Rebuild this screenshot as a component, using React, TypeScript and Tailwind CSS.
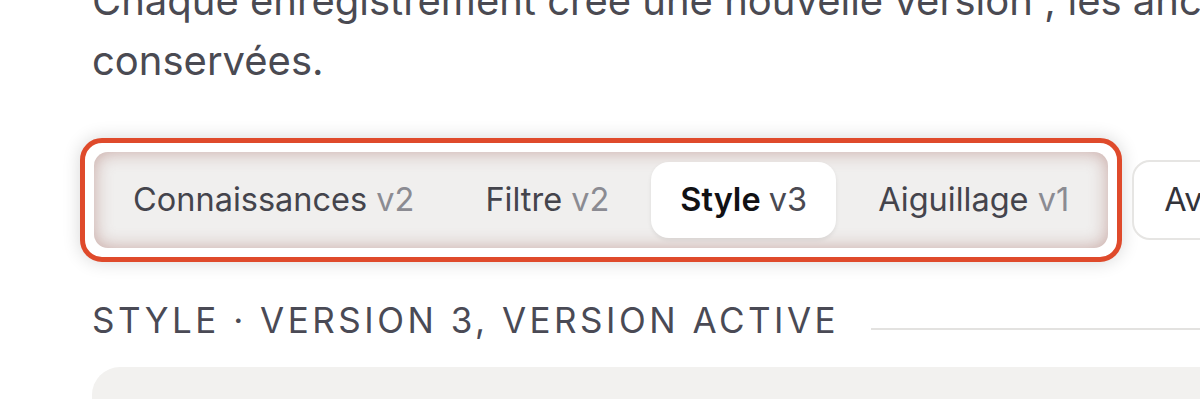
import React from "react";

const TABS = [
  { name: "Connaissances", version: "v2" },
  { name: "Filtre", version: "v2" },
  { name: "Style", version: "v3" },
  { name: "Aiguillage", version: "v1" },
];

export default function App() {
  const active = 2;

  return (
    <div className="h-[399px] w-full overflow-hidden bg-white font-['Inter',sans-serif]">
      <div className="w-[1700px] pl-[92px]">
        {/* Intro paragraph */}
        <p className="-mt-[29px] max-w-[1540px] text-[40px] leading-[60px] text-[#4a4a52]">
          Chaque enregistrement crée une nouvelle version ; les anciennes sont conservées.
        </p>

        {/* Tab row */}
        <div className="mt-[47px] -ml-[12px] flex items-center gap-[10px]">
          <div className="rounded-[22px] border-[5px] border-[#df4a2b] bg-white p-[9px] shadow-[0_0_18px_rgba(0,0,0,0.16)]">
            <div className="flex gap-[13px] rounded-[14px] bg-[#f0efee] p-[10px] shadow-[inset_0_0_18px_rgba(150,80,70,0.45)]">
              {TABS.map((tab, i) => (
                <button
                  key={tab.name}
                  className={
                    i === active
                      ? "h-[76px] rounded-[18px] bg-white px-[29px] text-[32.5px] font-semibold text-[#111114] shadow-[0_2px_4px_rgba(0,0,0,0.08)]"
                      : "h-[76px] rounded-[18px] px-[29px] text-[32.5px] text-[#44444c]"
                  }
                >
                  {tab.name}{" "}
                  <span className={i === active ? "font-normal text-[#4a4a52]" : "text-[#8b8b92]"}>
                    {tab.version}
                  </span>
                </button>
              ))}
            </div>
          </div>
          <button className="h-[80px] rounded-[18px] border-2 border-[#e6e5e3] bg-white px-[30px] text-[32.5px] text-[#33333a]">
            Avancé
          </button>
        </div>

        {/* Section heading */}
        <div className="mt-[38px] flex w-[1108px] items-center gap-[32px]">
          <h3 className="text-[35px] font-normal uppercase leading-[40px] tracking-[0.1em] text-[#4a4a55]">
            Style · version 3, version active
          </h3>
          <div className="mt-[18px] h-[2px] flex-1 bg-[#e3e2e0]" />
        </div>

        {/* Content card */}
        <div className="mt-[27px] h-[200px] w-[1200px] rounded-[28px] bg-[#f2f1ef]" />
      </div>
    </div>
  );
}
